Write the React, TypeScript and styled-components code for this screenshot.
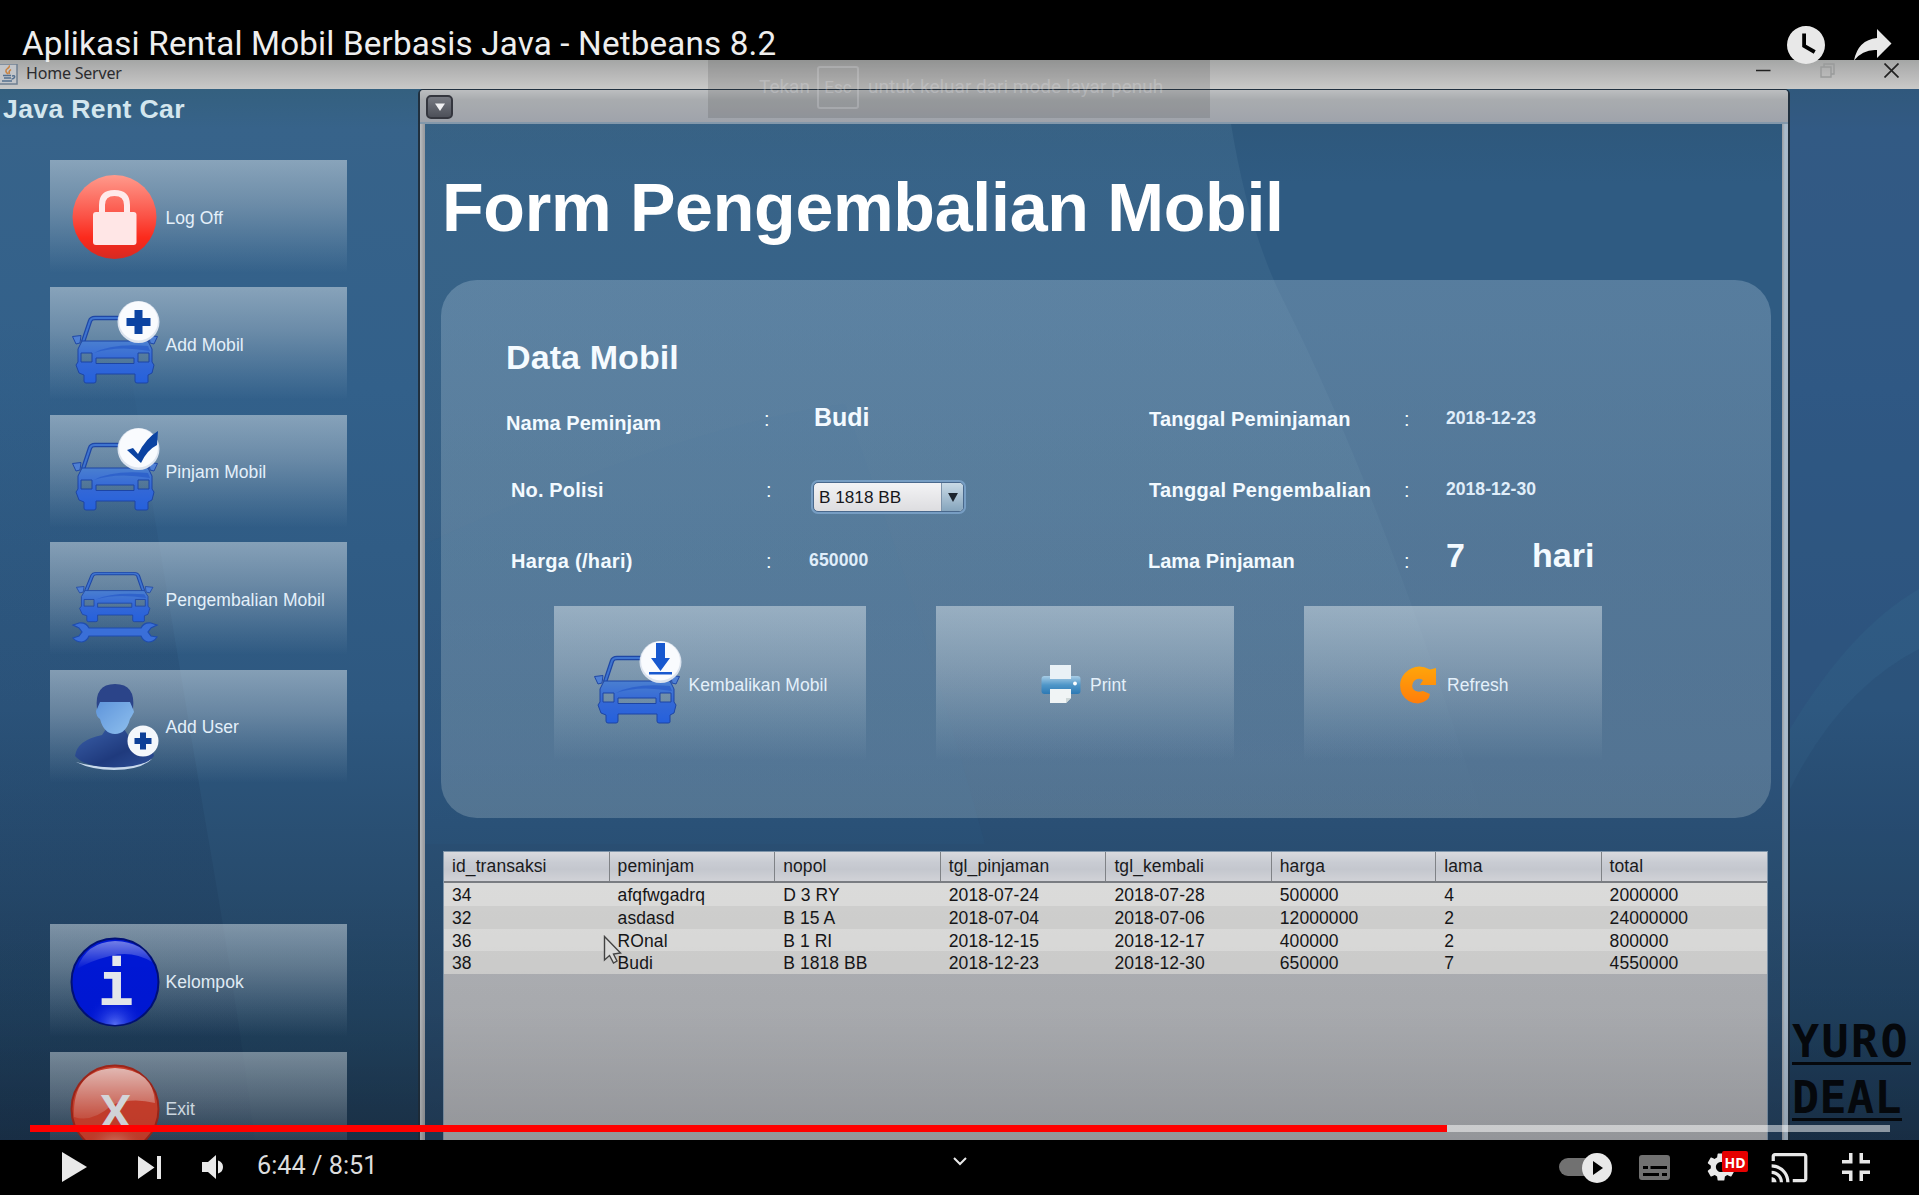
import React from "react";
import styled, { createGlobalStyle } from "styled-components";
import { MdCast, MdSettings } from "react-icons/md";

const Global = createGlobalStyle`
  * { box-sizing: border-box; }
  body { margin: 0; background: #000; overflow: hidden; }
`;

const sans = `"Liberation Sans", Arial, sans-serif`;

const Player = styled.main`
  position: relative;
  width: 1919px;
  height: 1195px;
  display: flex;
  flex-direction: column;
  overflow: hidden;
  background: #000;
  font-family: ${sans};
`;

/* ---------- player header ---------- */

const PlayerHeader = styled.header`
  position: relative;
  z-index: 5;
  height: 60px;
  flex: none;
  display: flex;
  align-items: flex-start;
  justify-content: space-between;
  padding: 0 27px 0 22px;
`;

const VideoTitle = styled.h1`
  margin: 24px 0 0;
  font: 400 33.2px/40px Roboto, sans-serif;
  letter-spacing: 0.17px;
  color: #eee;
  white-space: nowrap;
`;

const HeaderActions = styled.div`
  display: flex;
  gap: 29px;
  padding-top: 26px;
`;

/* ---------- video ---------- */

const Video = styled.section`
  position: relative;
  height: 1080px;
  flex: none;
  display: flex;
  flex-direction: column;
  overflow: hidden;
`;

const WindowBar = styled.div`
  height: 29px;
  flex: none;
  display: flex;
  align-items: center;
  background: linear-gradient(#a4a6a5, #b4b4b4 40%, #c9c9c8);
  padding: 0 20px 0 0;
`;

const WindowName = styled.span`
  flex: 1;
  margin: -4px 0 0 8px;
  font: 400 16px/24px "Noto Sans", "Open Sans", sans-serif;
  letter-spacing: -0.2px;
  color: #2b2b2e;
`;

const WindowButtons = styled.div`
  display: flex;
  gap: 49px;
  margin-top: -8px;
`;

const Desktop = styled.div`
  position: relative;
  flex: 1;
  display: flex;
  overflow: hidden;
  background: linear-gradient(#34607f 0, #37638a 40px, #32608a 300px, #2e5880 620px, #274b6d 800px, #20405c 950px, #1d364f 1051px);
`;

const Facets = styled.svg`
  position: absolute;
  inset: 0;
`;

const Sidebar = styled.nav`
  position: relative;
  width: 418px;
  flex: none;
  padding: 0 71px 0 49px;
`;

const Brand = styled.div`
  margin: 5px 0 36px -46px;
  font: 700 26.6px/30px ${sans};
  letter-spacing: 0.35px;
  color: #d3e6ee;
  white-space: nowrap;
`;

const glass = `linear-gradient(rgba(218, 228, 234, 0.5), rgba(205, 215, 222, 0.36) 38%, rgba(200, 215, 225, 0.13) 76%, rgba(200, 215, 225, 0) 98%)`;

const SideButton = styled.div<{ $gapBefore?: boolean }>`
  width: 297px;
  height: 115px;
  margin: ${(p) => (p.$gapBefore ? "139.8px" : "0")} 0 12.4px 0.5px;
  padding-left: 22px;
  display: flex;
  align-items: center;
  gap: 8px;
  background: ${glass};
`;

const ButtonText = styled.span`
  font: 400 17.5px/24px ${sans};
  letter-spacing: 0.05px;
  color: #e4f0fa;
  white-space: nowrap;
`;

/* ---------- internal frame ---------- */

const Frame = styled.section`
  position: relative;
  width: 1372px;
  flex: none;
  display: flex;
  flex-direction: column;
  border: solid #20303f;
  border-width: 1.5px 2px 0 2px;
  border-radius: 5px 5px 0 0;
  background: linear-gradient(90deg, #b9bcbf, #9b9da1 4px, #9b9da1 1362px, #a9bccd 1365px, #a9b8c8);
  padding: 0 6px 0 5px;
`;

const FrameBar = styled.div`
  height: 34px;
  flex: none;
  margin: 0 -6px 0 -5px;
  padding: 5px 6px;
  border-radius: 4px 4px 0 0;
  border-bottom: 2px solid #8398ab;
  background: linear-gradient(#bcbec0, #a9acaf 30%, #9fa3ab);
`;

const FrameMenu = styled.div`
  width: 27px;
  height: 24px;
  display: grid;
  place-items: center;
  border: 2px solid #34363e;
  border-radius: 5px;
  background: linear-gradient(#777a82, #4d5059);
`;

const FrameBody = styled.div`
  position: relative;
  flex: 1;
  overflow: hidden;
  padding: 0 11px 0 16px;
  background: linear-gradient(#2e587c, #2f5b82 60px, #2f5b82 200px, #2c527a 640px, #284c6e 760px, #233f5c 1015px);
`;

const FormTitle = styled.h2`
  position: relative;
  margin: 43px 0 0 1px;
  font: 700 68.2px/80px ${sans};
  letter-spacing: -0.3px;
  color: #fff;
  white-space: nowrap;
`;

const Card = styled.div`
  position: relative;
  height: 538px;
  margin: 33px 0 33px 0;
  padding: 58px 0 0 65px;
  border-radius: 36px;
  background: linear-gradient(rgba(190, 212, 230, 0.28), rgba(180, 202, 215, 0.28) 50%, rgba(180, 200, 208, 0.29));
`;

const CardHeading = styled.h3`
  margin: 0 0 19px;
  font: 700 34px/39px ${sans};
  letter-spacing: 0.1px;
  color: #f5fbff;
`;

const Fields = styled.div`
  display: grid;
  grid-template-columns: 258px 49px 335px 256px 42px 86px 200px;
  grid-template-rows: 71px 71px 67.500px;
`;

const Cell = styled.span<{ $size?: number; $top?: number; $shift?: number; $light?: boolean; $wide?: number }>`
  padding-top: ${(p) => p.$top ?? 13}px;
  padding-left: ${(p) => p.$shift ?? 0}px;
  font: ${(p) => (p.$light ? 400 : 700)} ${(p) => p.$size ?? 20}px/1 ${sans};
  letter-spacing: ${(p) => p.$wide ?? 0}px;
  color: ${(p) => ((p.$size ?? 20) < 20 ? "#e0eefa" : "#f3faff")};
  white-space: nowrap;
`;

const Price = styled(Cell)`
  margin-left: -4px;
`;

const Combo = styled.div`
  width: 151px;
  height: 30px;
  margin: 15px 0 0;
  display: flex;
  overflow: hidden;
  border: 1px solid #49688c;
  border-radius: 5px;
  outline: 2px solid rgba(140, 180, 222, 0.6);
  background: linear-gradient(#f3f3f5, #dddde0);
  font: 400 17.2px/29px ${sans};
  color: #17171b;
`;

const ComboValue = styled.span`
  flex: 1;
  padding-left: 5px;
  white-space: nowrap;
`;

const ComboArrow = styled.span`
  width: 22px;
  display: grid;
  place-items: center;
  border-left: 1px solid #7d93aa;
  background: linear-gradient(#c9dae6, #86a5bd);
`;

const Actions = styled.div`
  display: flex;
  gap: 70.5px;
  margin: 0 0 0 47.5px;
`;

const ActionButton = styled.div<{ $width: number; $pad: number; $gap: number }>`
  width: ${(p) => p.$width}px;
  height: 158px;
  padding-left: ${(p) => p.$pad}px;
  display: flex;
  align-items: center;
  gap: ${(p) => p.$gap}px;
  background: ${glass};
`;

/* ---------- table ---------- */

const TableBox = styled.div`
  position: relative;
  width: 1325px;
  height: 291px;
  margin-left: 2px;
  border: 1px solid #7f95aa;
  background: linear-gradient(#b1b2b7, #adafb3 50%, #a9abb0);
`;

const columns = "165.6px 165.6px 165.6px 165.6px 165.4px 164.5px 165.3px 1fr";

const HeadRow = styled.div`
  height: 31px;
  display: grid;
  grid-template-columns: ${columns};
  border-bottom: 2px solid #7a7d82;
  background: linear-gradient(#d9dade, #c9ccd3 35%, #c4c7ce 60%, #d1d2d7);
`;

const Head = styled.span`
  padding-left: 8px;
  border-right: 1px solid #7f8286;
  font: 400 17.5px/29px ${sans};
  letter-spacing: 0.1px;
  color: #1a1a1c;

  &:last-child {
    border-right: 0;
  }
`;

const Row = styled.div<{ $odd: boolean }>`
  height: 22.75px;
  display: grid;
  grid-template-columns: ${columns};
  background: ${(p) => (p.$odd ? "#cfcfce" : "#dbdbda")};
`;

const Data = styled.span`
  padding-left: 8px;
  font: 400 17.5px/24px ${sans};
  letter-spacing: 0.08px;
  color: #151517;
  white-space: nowrap;
`;

/* ---------- things lying over the video ---------- */

const Pointer = styled.svg`
  position: absolute;
  left: 603px;
  top: 875px;
`;

const Watermark = styled.div`
  position: absolute;
  left: 1792px;
  top: 953px;
  z-index: 3;
  display: flex;
  flex-direction: column;
  align-items: flex-start;
  gap: 4px;
`;

const WatermarkLine = styled.span<{ $width: number }>`
  width: ${(p) => p.$width}px;
  height: 52px;
  border-bottom: 3px solid #05080c;
  font: 700 45px/57px "DejaVu Sans Mono", monospace;
  letter-spacing: ${(p) => (p.$width > 115 ? 2.4 : 0.4)}px;
  color: #05080c;
`;

const Shade = styled.div`
  position: absolute;
  inset: 0;
  z-index: 2;
  background: linear-gradient(transparent 76%, rgba(0, 0, 0, 0.03) 88%, rgba(0, 0, 0, 0.13));
  pointer-events: none;
`;

const EscHint = styled.div`
  position: absolute;
  z-index: 4;
  left: 708px;
  top: 0;
  width: 502px;
  height: 58px;
  display: flex;
  align-items: center;
  padding: 0 0 4px 51px;
  background: rgba(60, 60, 62, 0.17);
  font: 400 19px/24px Roboto, sans-serif;
  color: rgba(235, 235, 240, 0.27);
  white-space: nowrap;
`;

const EscKey = styled.span`
  width: 42px;
  height: 43px;
  margin: 0 9px 0 7px;
  display: grid;
  place-items: center;
  border: 2px solid rgba(235, 235, 240, 0.22);
  border-radius: 3px;
  font-size: 17px;
`;

/* ---------- player controls ---------- */

const Track = styled.div`
  position: absolute;
  z-index: 6;
  left: 30px;
  top: 1125px;
  width: 1860px;
  height: 7px;
  background: rgba(255, 255, 255, 0.5);
`;

const Played = styled.div`
  width: 1417px;
  height: 7px;
  background: #f00;
`;

const Controls = styled.footer`
  position: relative;
  height: 55px;
  flex: none;
  display: flex;
  align-items: center;
  padding: 0 49px 0 62px;
  background: #000;
  color: #e8e8e8;
`;

const Left = styled.div`
  width: 891px;
  display: flex;
  align-items: center;
`;

const Glyph = styled.svg<{ $before?: number }>`
  flex: none;
  margin-top: -1px;
  margin-left: ${(p) => p.$before ?? 0}px;
`;

const Time = styled.span`
  margin: -3px 0 0 34px;
  font: 400 25.3px/30px Roboto, sans-serif;
  color: #ddd;
  white-space: nowrap;
`;

const Right = styled.div`
  margin: -1px 0 0 auto;
  display: flex;
  align-items: center;
`;

const Autoplay = styled.div`
  position: relative;
  width: 40px;
  height: 18px;
  margin: 0 40px 0 0;
  border-radius: 9px;
  background: #717171;
`;

const Knob = styled.span`
  position: absolute;
  left: 23px;
  top: -5px;
  width: 30px;
  height: 30px;
  display: grid;
  place-items: center;
  border-radius: 50%;
  background: #e8e8e8;
`;

const Settings = styled.div`
  position: relative;
  width: 28px;
  height: 28px;
  margin: 0 35px 0 37px;

  > svg {
    display: block;
    margin: -3px;
  }
`;

const HdBadge = styled.span`
  position: absolute;
  left: 15px;
  top: -2px;
  width: 26px;
  height: 21px;
  border-radius: 2px;
  background: #e60000;
  text-align: center;
  font: 700 14px/23px "Open Sans", sans-serif;
  letter-spacing: 0;
  color: #fff;
`;

const Cast = styled(MdCast)`
  margin-right: 33px;
`;

/* ---------- icons ---------- */

const BlueDefs = ({ id }: { id: string }) => (
  <defs>
    <linearGradient id={id} x1="0" y1="0" x2="0" y2="1">
      <stop offset="0" stopColor="#4a7fd0" />
      <stop offset="0.45" stopColor="#3569d6" />
      <stop offset="1" stopColor="#2560dc" />
    </linearGradient>
  </defs>
);

const CarShape = ({ id }: { id: string }) => (
  <g>
    <path d="M11 41 L18 20 Q19 17 23 17 L64 17 Q68 17 69 20 L75 41" fill="none" stroke="#1f47a5" strokeWidth="4.4" />
    <path d="M11 41 L18 20 Q19 17 23 17 L64 17 Q68 17 69 20 L75 41" fill="none" stroke="#3f74cf" strokeWidth="2" />
    <path d="M0.5 35.5 L9 34.5 L8 42 L4 43 Z M85.5 35.5 L77 34.5 L78 42 L82 43 Z" fill="#4f80d4" stroke="#1f47a5" strokeWidth="1" />
    <path
      fillRule="evenodd"
      stroke="#1d45a4"
      strokeWidth="1"
      fill={`url(#${id})`}
      d="M10 40 H76 L80 48 V61 L82 64 L80 72 L76 74 V81 Q76 82 74 82 H65 Q63 82 63 80 V73 H24 V80 Q24 82 22 82 H14 Q12 82 12 80 V74 L7 72 L4 64 L6 61 V48 Z M9 52 V61 H20 V52 Z M66 52 V61 H77 V52 Z M24 57 V62.500 H62 V57 Z"
    />
    <path d="M22 52 Q40 42 76 45 L78 50 Q45 44 22 52 Z" fill="#2557c8" opacity="0.65" />
  </g>
);

type Badge = "plus" | "check" | "down" | "wrench";

const CarIcon = ({ badge }: { badge: Badge }) => {
  const id = `car-${badge}`;
  return (
    <svg width="86" height="86" viewBox="0 1 86 86" overflow="visible">
      <BlueDefs id={id} />
      {badge === "wrench" ? (
        <>
          <g transform="translate(4 5) scale(0.9 0.74)">
            <CarShape id={id} />
          </g>
          <path
            d="M1 69 L7 67 Q14 66 17 72 H69 Q72 66 79 67 L85 69 L79 72 L76 76 L79 80 L85 81 Q82 86 76 86 Q71 85 69 80 H17 Q15 85 10 86 Q4 86 1 82 L7 80 L10 76 L7 72 Z"
            fill="#3a6fd8"
            stroke="#1f4dae"
            strokeWidth="1.2"
          />
        </>
      ) : (
        <>
          <CarShape id={id} />
          <circle cx="66.500" cy="21" r="21" fill="#dbe3ee" />
          <circle cx="66.500" cy="20" r="19.500" fill="#f9fbfe" />
        </>
      )}
      {badge === "plus" && <path d="M62.500 9 h8 v8 h8 v8 h-8 v8 h-8 v-8 h-8 v-8 h8 Z" fill="#0b43a2" />}
      {badge === "check" && <path d="M55 22 L61 20 L66 26 Q74 10 86 3 L85 17 Q75 22 69 35 Z" fill="#0b43a2" />}
      {badge === "down" && (
        <path d="M62 2 h9 v15 h5 l-9.500 13 l-9.500 -13 h5 Z M55 31 h23 v2.500 h-23 Z" fill="#1758cf" />
      )}
    </svg>
  );
};

const LockIcon = () => (
  <svg width="86" height="86" viewBox="0 1 86 86" overflow="visible">
    <defs>
      <linearGradient id="lock" x1="0" y1="0" x2="0" y2="1">
        <stop offset="0" stopColor="#ff9a8c" />
        <stop offset="0.5" stopColor="#fb5145" />
        <stop offset="0.75" stopColor="#fb2a1c" />
        <stop offset="1" stopColor="#d62a22" />
      </linearGradient>
    </defs>
    <circle cx="42.500" cy="43" r="42" fill="url(#lock)" />
    <path d="M30 44 V31 Q30 19 42.500 19 Q55 19 55 31 V44" fill="none" stroke="#ffeaea" strokeWidth="6" />
    <rect x="21" y="38" width="43.500" height="33" rx="3" fill="#ffe6e6" />
  </svg>
);

const UserIcon = () => (
  <svg width="86" height="86" viewBox="0 1 86 86" overflow="visible">
    <defs>
      <linearGradient id="torso" x1="0" y1="0" x2="1" y2="1">
        <stop offset="0" stopColor="#3a5fa8" />
        <stop offset="0.6" stopColor="#1f3a7d" />
        <stop offset="1" stopColor="#2d4f97" />
      </linearGradient>
      <linearGradient id="face" x1="0" y1="0" x2="1" y2="1">
        <stop offset="0" stopColor="#5d93da" />
        <stop offset="1" stopColor="#8fc0ee" />
      </linearGradient>
    </defs>
    <path d="M4 79 Q20 87 42 87 Q68 87 80 76 Q60 84 42 84 Q20 84 4 79 Z" fill="#c9d9ec" />
    <path d="M3 73 Q5 57 30 52 L34 46 H52 L56 52 Q80 58 82 73 Q74 84 42 84.500 Q12 84 3 73 Z" fill="url(#torso)" />
    <path d="M26 22 Q26 16 43 16 Q60 16 60 22 L62 29 Q60 33 58 36 Q54 51 43 51 Q32 51 28 36 Q24 33 24 28 Z" fill="url(#face)" />
    <path d="M25 26 Q22 1 43 1 Q64 1 61 26 L58 19 H28 Z" fill="#2b4489" />
    <circle cx="71" cy="58" r="15.500" fill="#f4f7fb" />
    <path d="M68 49.500 h6 v5.500 h5.500 v6 h-5.500 v5.500 h-6 v-5.500 h-5.500 v-6 h5.500 Z" fill="#0d3f97" />
  </svg>
);

const GlossyIcon = ({ glyph, kind }: { glyph: string; kind: "info" | "exit" }) => {
  const info = kind === "info";
  return (
    <svg width="86" height="86" viewBox="0 1 86 86" overflow="visible">
      <defs>
        <linearGradient id={`gloss-${kind}`} x1="0" y1="0" x2="0" y2="1">
          <stop offset="0" stopColor="#fff" stopOpacity={info ? 0.45 : 0.7} />
          <stop offset="1" stopColor="#fff" stopOpacity={info ? 0 : 0.12} />
        </linearGradient>
        <radialGradient id={`glow-${kind}`} cx="0.5" cy="1" r="0.35">
          <stop offset="0" stopColor={info ? "#5c74ff" : "#ffb9a0"} />
          <stop offset="1" stopColor={info ? "#0018e0" : "#d8432f"} stopOpacity="0" />
        </radialGradient>
      </defs>
      <circle cx="43" cy="44" r="43.500" fill={info ? "#0018d8" : "#d8432f"} stroke={info ? "#001078" : "#a8281c"} strokeWidth="2" />
      <circle cx="43" cy="44" r="43" fill={`url(#glow-${kind})`} />
      <path
        d={info ? "M5 31 Q14 4 43 3 Q72 4 80 24 Q60 12 38 18 Q18 23 5 31 Z" : "M2 52 Q0 5 43 3 Q82 5 83 38 Q60 32 40 40 Q20 58 2 52 Z"}
        fill={`url(#gloss-${kind})`}
      />
      <text
        x="43.500"
        y={info ? 67 : 63}
        textAnchor="middle"
        fontFamily={info ? "DejaVu Sans Mono" : "Open Sans"}
        fontWeight="700"
        fontSize={info ? 60 : 46}
        fill="#e9ecf0"
      >
        {glyph}
      </text>
    </svg>
  );
};

const PrinterIcon = () => (
  <svg width="40" height="40" viewBox="0 0 40 40">
    <defs>
      <linearGradient id="printer" x1="0" y1="0" x2="0" y2="1">
        <stop offset="0" stopColor="#a8cde6" />
        <stop offset="0.5" stopColor="#4f96c8" />
        <stop offset="1" stopColor="#2d79b4" />
      </linearGradient>
    </defs>
    <rect x="0.500" y="11" width="39" height="18" rx="3" fill="url(#printer)" />
    <path d="M9 0 H30 V14 H9 Z" fill="#e9f1f6" />
    <path d="M9 24 H30 V33 L25 38 H9 Z" fill="#f0f4f5" />
    <path d="M30 33 L25 38 V33 Z" fill="#cfd8d8" />
    <circle cx="34" cy="18.500" r="1.900" fill="#fff" />
  </svg>
);

const RefreshIcon = () => (
  <svg width="38" height="40" viewBox="0 0 38 40">
    <defs>
      <linearGradient id="refresh" x1="0" y1="0" x2="0" y2="1">
        <stop offset="0" stopColor="#ffa50a" />
        <stop offset="1" stopColor="#ff7d0a" />
      </linearGradient>
    </defs>
    <path
      fill="url(#refresh)"
      d="M37 3 V20 H21 L24 15 Q19 12 15 16 Q12 20 14 24 Q17 28 24 26 L31 29 Q30 37 19 38.500 Q8 38 3 29 Q-2 17 6 8 Q17 -3 31 4.500 Z"
    />
  </svg>
);

const JavaIcon = () => (
  <svg width="18" height="22" viewBox="0 0 18 22">
    <rect x="-3" y="0" width="20" height="20" fill="#c2c5c9" stroke="#6f7f91" strokeWidth="1.500" />
    <path d="M8 10 Q4 7 7.500 4.500 Q10 3 9 1.500 M9.500 10 Q8 7.500 11 5.500" fill="none" stroke="#c9813f" strokeWidth="1.500" />
    <path d="M3 11.500 H11 M4 14 H11 M2 17 H12 M12 12 Q15.500 11 14.500 13.500 Q13.500 15 11.500 15" fill="none" stroke="#54708f" strokeWidth="1.400" />
  </svg>
);

/* ---------- data ---------- */

const sideItems = [
  { label: "Log Off", icon: <LockIcon /> },
  { label: "Add Mobil", icon: <CarIcon badge="plus" /> },
  { label: "Pinjam Mobil", icon: <CarIcon badge="check" /> },
  { label: "Pengembalian Mobil", icon: <CarIcon badge="wrench" /> },
  { label: "Add User", icon: <UserIcon /> },
  { label: "Kelompok", icon: <GlossyIcon glyph="i" kind="info" />, gapBefore: true },
  { label: "Exit", icon: <GlossyIcon glyph="X" kind="exit" /> },
];

const heads = ["id_transaksi", "peminjam", "nopol", "tgl_pinjaman", "tgl_kembali", "harga", "lama", "total"];

const rows = [
  ["34", "afqfwgadrq", "D 3 RY", "2018-07-24", "2018-07-28", "500000", "4", "2000000"],
  ["32", "asdasd", "B 15 A", "2018-07-04", "2018-07-06", "12000000", "2", "24000000"],
  ["36", "ROnal", "B 1 RI", "2018-12-15", "2018-12-17", "400000", "2", "800000"],
  ["38", "Budi", "B 1818 BB", "2018-12-23", "2018-12-30", "650000", "7", "4550000"],
];

export default function App() {
  return (
    <>
      <Global />
      <Player>
        <PlayerHeader>
          <VideoTitle>Aplikasi Rental Mobil Berbasis Java - Netbeans 8.2</VideoTitle>
          <HeaderActions>
            <svg width="38" height="38" viewBox="8 8 20 20">
              <path
                fill="#e8e8e8"
                fillRule="evenodd"
                d="M18 8a10 10 0 1 0 0 20a10 10 0 1 0 0-20Z M16 19.020V12h2v5.860l5.100 2.950l-1 1.730Z"
              />
            </svg>
            <svg width="38" height="38" viewBox="0 0 38 38">
              <path fill="#e8e8e8" d="M23 12 V3 L37.500 17.500 L23 32 V24 Q9 23 0 34.500 Q4 14 23 12 Z" />
            </svg>
          </HeaderActions>
        </PlayerHeader>

        <Video>
          <WindowBar>
            <JavaIcon />
            <WindowName>Home Server</WindowName>
            <WindowButtons>
              <svg width="15" height="15" viewBox="0 0 15 15">
                <path d="M0 7.500H14.500" stroke="#222" strokeWidth="1.500" />
              </svg>
              <svg width="15" height="15" viewBox="0 0 15 15" fill="none" stroke="#999b9b" strokeWidth="1.400">
                <path d="M1 4H11V14H1Z M4 4V1H14V11H11" />
              </svg>
              <svg width="15" height="15" viewBox="0 0 15 15">
                <path d="M0.500 0.500L14.500 14.500M14.500 0.500L0.500 14.500" stroke="#222" strokeWidth="1.700" />
              </svg>
            </WindowButtons>
          </WindowBar>

          <Desktop>
            <Facets width="1919" height="1051">
              <defs>
                <linearGradient id="fold" x1="0" y1="0" x2="0" y2="1">
                  <stop offset="0" stopColor="#142c4c" stopOpacity="0" />
                  <stop offset="0.5" stopColor="#142c4c" stopOpacity="0.14" />
                  <stop offset="1" stopColor="#142c4c" stopOpacity="0.2" />
                </linearGradient>
              </defs>
              <path d="M0 220 L130 280 Q170 520 205 730 Q235 900 255 1051 H0 Z" fill="url(#fold)" />
              <path d="M1919 560 Q1840 600 1790 700 V1051 H1919 Z" fill="#142c4c" opacity="0.1" />
              <path d="M1790 0 H1919 V500 Q1850 540 1790 640 Z" fill="#2c4a78" opacity="0.35" />
            </Facets>

            <Sidebar>
              <Brand>Java Rent Car</Brand>
              {sideItems.map((item) => (
                <SideButton key={item.label} $gapBefore={item.gapBefore}>
                  {item.icon}
                  <ButtonText>{item.label}</ButtonText>
                </SideButton>
              ))}
            </Sidebar>

            <Frame>
              <FrameBar>
                <FrameMenu>
                  <svg width="10" height="8" viewBox="0 0 10 8">
                    <path d="M0 0.500H10L5 8Z" fill="#f1f1f3" />
                  </svg>
                </FrameMenu>
              </FrameBar>
              <FrameBody>
                <Facets width="1357" height="1015">
                  <defs>
                    <linearGradient id="sheen" x1="0" y1="0" x2="0" y2="1">
                      <stop offset="0" stopColor="#4a7596" stopOpacity="0.34" />
                      <stop offset="0.55" stopColor="#4a7596" stopOpacity="0.22" />
                      <stop offset="1" stopColor="#4a7596" stopOpacity="0" />
                    </linearGradient>
                  </defs>
                  <path d="M0 0 H806 Q824 110 860 180 Q960 380 1060 700 H0 Z" fill="url(#sheen)" />
                  <path d="M0 420 Q260 300 420 280 Q500 500 560 720 H0 Z" fill="#2b5f86" opacity="0.16" />
                </Facets>
                <FormTitle>Form Pengembalian Mobil</FormTitle>
                <Card>
                  <CardHeading>Data Mobil</CardHeading>
                  <Fields>
                    <Cell $top={17} $wide={0.05}>Nama Peminjam</Cell>
                    <Cell $light>:</Cell>
                    <Cell $size={25} $top={8.5} $shift={1}>Budi</Cell>
                    <Cell $shift={1} $wide={0.17}>Tanggal Peminjaman</Cell>
                    <Cell $light>:</Cell>
                    <Cell $size={17.6} $top={14}>2018-12-23</Cell>
                    <Cell />

                    <Cell $shift={5} $wide={0.15}>No. Polisi</Cell>
                    <Cell $shift={2} $light>:</Cell>
                    <Combo>
                      <ComboValue>B 1818 BB</ComboValue>
                      <ComboArrow>
                        <svg width="10" height="9" viewBox="0 0 11 10">
                          <path d="M0 0H11L5.500 10Z" fill="#1c242e" />
                        </svg>
                      </ComboArrow>
                    </Combo>
                    <Cell $shift={1} $wide={0.3}>Tanggal Pengembalian</Cell>
                    <Cell $light>:</Cell>
                    <Cell $size={17.6} $top={14}>2018-12-30</Cell>
                    <Cell />

                    <Cell $shift={5} $wide={0.3}>Harga (/hari)</Cell>
                    <Cell $shift={2} $light>:</Cell>
                    <Price $size={17.6} $top={13.5} $wide={0.1}>650000</Price>
                    <Cell>Lama Pinjaman</Cell>
                    <Cell $light>:</Cell>
                    <Cell $size={34} $top={0}>7</Cell>
                    <Cell $size={34} $top={0}>hari</Cell>
                  </Fields>
                  <Actions>
                    <ActionButton $width={312} $pad={40} $gap={9}>
                      <CarIcon badge="down" />
                      <ButtonText>Kembalikan Mobil</ButtonText>
                    </ActionButton>
                    <ActionButton $width={297.5} $pad={105} $gap={9}>
                      <PrinterIcon />
                      <ButtonText>Print</ButtonText>
                    </ActionButton>
                    <ActionButton $width={297.5} $pad={95} $gap={10}>
                      <RefreshIcon />
                      <ButtonText>Refresh</ButtonText>
                    </ActionButton>
                  </Actions>
                </Card>
                <TableBox>
                  <HeadRow>
                    {heads.map((h) => (
                      <Head key={h}>{h}</Head>
                    ))}
                  </HeadRow>
                  {rows.map((r, i) => (
                    <Row key={r[0]} $odd={i % 2 === 1}>
                      {r.map((c, j) => (
                        <Data key={j}>{c}</Data>
                      ))}
                    </Row>
                  ))}
                </TableBox>
              </FrameBody>
            </Frame>
          </Desktop>

          <Pointer width="20" height="32" viewBox="0 0 20 32">
            <path d="M1.500 1.500 V25 L6.500 20.500 L10.500 28 L14 26 L10.500 19 L17.500 18 Z" fill="#dededd" stroke="#444" strokeWidth="1.400" />
          </Pointer>
          <Watermark>
            <WatermarkLine $width={119}>YURO</WatermarkLine>
            <WatermarkLine $width={110}>DEAL</WatermarkLine>
          </Watermark>
          <EscHint>
            Tekan<EscKey>Esc</EscKey>untuk keluar dari mode layar penuh
          </EscHint>
          <Shade />
        </Video>

        <Track>
          <Played />
        </Track>

        <Controls>
          <Left>
            <Glyph width="25" height="30" viewBox="0 0 25 30" fill="currentColor">
              <path d="M0 0L25 15L0 30Z" />
            </Glyph>
            <Glyph $before={51} width="23" height="23" viewBox="0 0 23 23" fill="currentColor">
              <path d="M0 0L16.500 11.500L0 23Z M19 0H23V23H19Z" />
            </Glyph>
            <Glyph $before={41} width="21" height="24" viewBox="0 0 21 24" fill="currentColor">
              <path d="M0 7H6L14 0V24L6 17H0Z M16 5.500Q21 7 21 12Q21 17 16 18.500Z" />
            </Glyph>
            <Time>6:44 / 8:51</Time>
          </Left>
          <Chevron width="14" height="9" viewBox="0 0 14 9">
            <path d="M1 1L7 7L13 1" fill="none" stroke="#e8e8e8" strokeWidth="2" />
          </Chevron>
          <Right>
            <Autoplay>
              <Knob>
                <svg width="11" height="14" viewBox="0 0 11 14">
                  <path d="M1 0L11 7L1 14Z" fill="#000" />
                </svg>
              </Knob>
            </Autoplay>
            <svg width="31" height="25" viewBox="0 0 31 25">
              <path
                fill="#717171"
                fillRule="evenodd"
                d="M3 0H28Q31 0 31 3V22Q31 25 28 25H3Q0 25 0 22V3Q0 0 3 0Z M4 11V14H9V11Z M11.500 11V14H28V11Z M4 18V21H20V18Z M23 18V21H28V18Z"
              />
            </svg>
            <Settings>
              <MdSettings size={34} />
              <HdBadge>HD</HdBadge>
            </Settings>
            <Cast size={39} />
            <svg width="28" height="28" viewBox="10 10 16 16" fill="currentColor">
              <path d="M14 14h-4v2h6v-6h-2Z M22 14v-4h-2v6h6v-2Z M20 26h2v-4h4v-2h-6Z M10 22h4v4h2v-6h-6Z" />
            </svg>
          </Right>
        </Controls>
      </Player>
    </>
  );
}

const Chevron = styled.svg`
  flex: none;
  margin-top: -13px;
`;
